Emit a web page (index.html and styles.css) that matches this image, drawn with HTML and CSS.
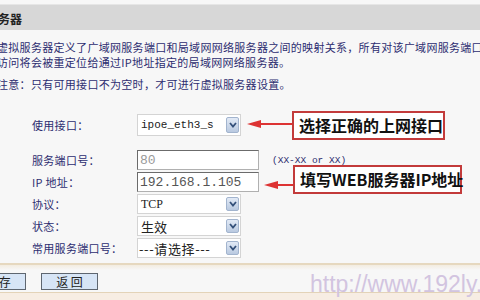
FILE: index.html
```html
<!DOCTYPE html>
<html lang="zh-CN">
<head>
  <meta charset="UTF-8">
  <title>虚拟服务器</title>
  <link rel="stylesheet" href="styles.css">
</head>
<body>
  <div class="page">
    <div class="title-bar"><span class="title">虚拟服务器</span></div>

    <div class="desc">
      <p>虚拟服务器定义了广域网服务端口和局域网网络服务器之间的映射关系，所有对该广域网服务端口的</p>
      <p>访问将会被重定位给通过IP地址指定的局域网网络服务器。</p>
      <p class="note">注意：只有可用接口不为空时，才可进行虚拟服务器设置。</p>
    </div>

    <div class="form">
      <div class="row row-first">
        <label>使用接口：</label>
        <div class="select mono-sm">ipoe_eth3_s<span class="drop"><svg width="8" height="6" viewBox="0 0 8 6"><path d="M1 1 L4 4.5 L7 1" fill="none" stroke="#34507a" stroke-width="1.8"/></svg></span></div>
      </div>
      <div class="row row-gap">
        <label>服务端口号：</label>
        <div class="input mono muted">80</div>
        <span class="hint">(XX-XX or XX)</span>
      </div>
      <div class="row">
        <label>IP 地址：</label>
        <div class="input mono">192.168.1.105</div>
      </div>
      <div class="row">
        <label>协议：</label>
        <div class="select serif">TCP<span class="drop"><svg width="8" height="6" viewBox="0 0 8 6"><path d="M1 1 L4 4.5 L7 1" fill="none" stroke="#34507a" stroke-width="1.8"/></svg></span></div>
      </div>
      <div class="row">
        <label>状态：</label>
        <div class="select">生效<span class="drop"><svg width="8" height="6" viewBox="0 0 8 6"><path d="M1 1 L4 4.5 L7 1" fill="none" stroke="#34507a" stroke-width="1.8"/></svg></span></div>
      </div>
      <div class="row">
        <label>常用服务端口号：</label>
        <div class="select wide-dash">---请选择---<span class="drop"><svg width="8" height="6" viewBox="0 0 8 6"><path d="M1 1 L4 4.5 L7 1" fill="none" stroke="#34507a" stroke-width="1.8"/></svg></span></div>
      </div>
    </div>

    <div class="btn-bar">
      <button class="btn btn-save">保 存</button>
      <button class="btn">返 回</button>
    </div>
    <div class="bottom"></div>

    <!-- annotations drawn over the screenshot -->
    <svg class="arrow arrow-1" width="46" height="10" viewBox="0 0 46 10">
      <path d="M12 5 H46" stroke="#d33" stroke-width="2"/>
      <path d="M0 5 L14 1 L14 9 Z" fill="#d33"/>
    </svg>
    <div class="callout callout-1">选择正确的上网接口</div>

    <svg class="arrow arrow-2" width="30" height="10" viewBox="0 0 30 10">
      <path d="M12 5 H30" stroke="#d33" stroke-width="2"/>
      <path d="M0 5 L14 1 L14 9 Z" fill="#d33"/>
    </svg>
    <div class="callout callout-2">填写WEB服务器IP地址</div>

    <div class="watermark">http://www.192ly.com</div>
  </div>
</body>
</html>
```

FILE: styles.css
```css
body {
  margin: 0;
  background: #f7f7f7;
  font-family: "Noto Sans CJK SC", "Liberation Sans", sans-serif;
  color: #2d2d70;
}

.page {
  position: relative;
  width: 480px;
  height: 300px;
  overflow: hidden;
  background: #f7f7f7;
}

.title-bar {
  margin-top: 4px;
  height: 26px;
  background: #d7d7d7;
  border-top: 1px solid #e6e6e6;
  box-sizing: border-box;
  overflow: hidden;
  white-space: nowrap;
}

.title {
  display: inline-block;
  margin-left: -38px;
  line-height: 25px;
  font-size: 12px;
  font-weight: bold;
  color: #222;
}

.desc {
  padding-top: 10px;
  margin-left: -3px;
  font-size: 11px;
  line-height: 15px;
  letter-spacing: 0.3px;
  white-space: nowrap;
}

.desc p {
  margin: 0;
}

.desc .note {
  margin-top: 7px;
}

.form {
  padding-left: 32px;
}

.row {
  display: flex;
  align-items: center;
  height: 20px;
  margin-top: 2px;
}

.row-first {
  height: 22px;
  margin-top: 22px;
}

.row-gap {
  margin-top: 14px;
}

.row label {
  width: 105px;
  font-size: 11px;
  letter-spacing: 0.3px;
}

.select {
  position: relative;
  display: flex;
  align-items: center;
  width: 104px;
  height: 100%;
  box-sizing: border-box;
  padding-left: 3px;
  background: #fff;
  border: 1px solid #d4d4d4;
  font-size: 13px;
  color: #222;
}

.wide-dash {
  letter-spacing: 0.6px;
  padding-left: 1px;
}

.drop {
  position: absolute;
  right: 1px;
  top: 2px;
  bottom: 2px;
  width: 13px;
  display: flex;
  align-items: center;
  justify-content: center;
  background: linear-gradient(#e2eaf6, #b9c9e0);
  border: 1px solid #a2b4ce;
  border-radius: 2px;
  box-sizing: border-box;
}

.mono-sm {
  font-family: "Liberation Mono", monospace;
  font-size: 11px;
}

.serif {
  font-family: "Liberation Serif", serif;
  font-size: 12px;
}

.input {
  display: flex;
  align-items: center;
  width: 122px;
  height: 100%;
  box-sizing: border-box;
  padding-left: 2px;
  background: #fff;
  border: 1px solid #6b6b6b;
  border-right-color: #b0b0b0;
  border-bottom-color: #b0b0b0;
  color: #555;
}

.mono {
  font-family: "Liberation Mono", monospace;
  font-size: 13px;
}

.muted {
  color: #999;
}

.hint {
  margin-left: 13px;
  font-family: "Liberation Mono", monospace;
  font-size: 9.5px;
  color: #2d2d70;
}

.btn-bar {
  display: flex;
  align-items: flex-end;
  gap: 15px;
  height: 25px;
  margin-top: 5px;
  padding-bottom: 2px;
  border-top: 2px solid #e6d8bf;
  background: linear-gradient(#f3ece0, #f7f7f7 5px);
}

.btn {
  width: 57px;
  height: 17px;
  padding: 0;
  background: #d7e5f6;
  border: 1px solid #5e6670;
  font-family: "Noto Sans CJK SC", sans-serif;
  font-size: 12px;
  line-height: 14px;
  color: #222;
}

.btn-save {
  margin-left: -31px;
}

.bottom {
  height: 7px;
  border-top: 1px solid #e3d3b8;
  background: #f7ede3;
}

.arrow {
  position: absolute;
}

.arrow-1 {
  left: 247px;
  top: 119px;
}

.arrow-2 {
  left: 264px;
  top: 180px;
}

.callout {
  position: absolute;
  box-sizing: border-box;
  border: 2px solid #c33b3b;
  background: #fff;
  font-size: 16px;
  font-weight: bold;
  line-height: 25px;
  color: #111;
  padding-left: 5px;
  white-space: nowrap;
}

.callout-1 {
  left: 292px;
  top: 111px;
  width: 153px;
  height: 29px;
}

.callout-2 {
  left: 293px;
  top: 165px;
  width: 169px;
  height: 29px;
}

.watermark {
  position: absolute;
  left: 310px;
  top: 271px;
  font-family: "Liberation Sans", Arial, sans-serif;
  font-size: 23px;
  color: #d2c4e0;
  white-space: nowrap;
}
```
